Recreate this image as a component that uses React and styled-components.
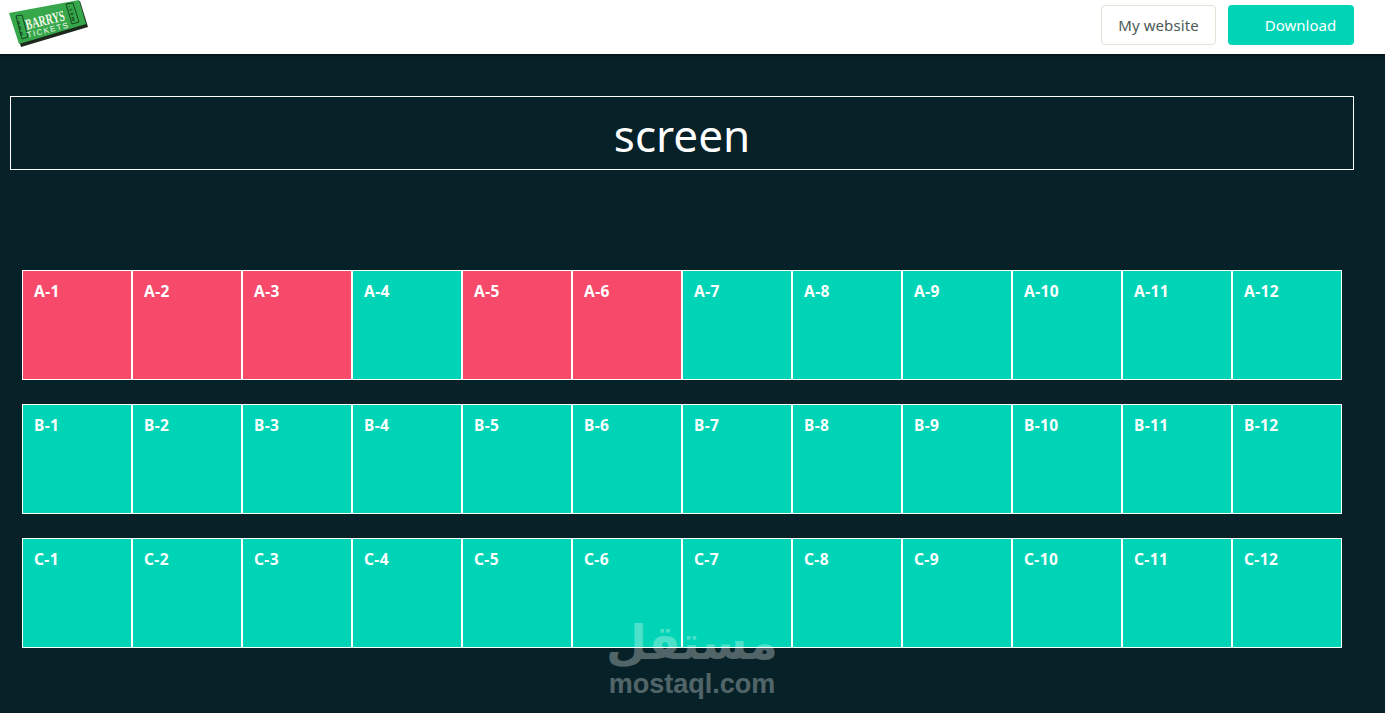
import styled, { createGlobalStyle } from 'styled-components';

const FONT = `'Noto Sans', 'Open Sans', sans-serif`;

const rows = [
  { name: 'A', taken: [1, 2, 3, 5, 6] },
  { name: 'B', taken: [] },
  { name: 'C', taken: [] },
];
const seatNumbers = Array.from({ length: 12 }, (_, i) => i + 1);

const GlobalStyle = createGlobalStyle`
  html, body {
    margin: 0;
    padding: 0;
    height: 100%;
    overflow: hidden;
    background: #062127;
    font-family: ${FONT};
  }
`;

const Page = styled.div`
  position: relative;
  height: 713px;
  overflow: hidden;
  background: #062127;
`;

const Header = styled.header`
  height: 54px;
  box-sizing: border-box;
  background: #fff;
  display: flex;
  align-items: flex-start;
  justify-content: space-between;
  padding: 0 31px 0 5px;
  box-shadow: 0 1px 3px rgba(0, 0, 0, 0.5);
`;

const Actions = styled.div`
  display: flex;
  gap: 12px;
  padding-top: 5px;
`;

const HeaderButton = styled.button`
  height: 40px;
  box-sizing: border-box;
  border-radius: 4px;
  font-family: ${FONT};
  font-size: 15px;
  cursor: pointer;
`;

const OutlineButton = styled(HeaderButton)`
  width: 115px;
  padding: 0;
  background: #fff;
  border: 1px solid #e2e2d6;
  color: #4c5a56;
  letter-spacing: 0.1px;
`;

const SolidButton = styled(HeaderButton)`
  width: 126px;
  padding: 0 0 0 19px;
  background: #00d4b6;
  border: 0;
  color: #fff;
`;

const Main = styled.main`
  padding: 42px 31px 0 10px;
`;

const Screen = styled.div`
  height: 74px;
  box-sizing: border-box;
  border: 1px solid #fff;
  padding-top: 4px;
  color: #fff;
  display: flex;
  align-items: center;
  justify-content: center;
  font-size: 44px;
  line-height: 1;
`;

const SeatRows = styled.div`
  display: flex;
  flex-direction: column;
  gap: 24px;
  margin: 100px 0 0 12px;
`;

const SeatRow = styled.div`
  display: flex;
`;

const Seat = styled.div`
  width: 110px;
  height: 110px;
  box-sizing: border-box;
  border: 1px solid #fff;
  padding: 10px 11px;
  background: ${props => (props.$taken ? '#f7496a' : '#00d4b6')};
  color: #fff;
  font-size: 15.5px;
  line-height: 20px;
  font-weight: 700;
  letter-spacing: 0.4px;
`;

const Watermark = styled.div`
  position: absolute;
  left: 592px;
  top: 616px;
  width: 200px;
  display: flex;
  flex-direction: column;
  align-items: center;
  color: #fff;
  opacity: 0.3;
  pointer-events: none;
`;

const WatermarkArabic = styled.div`
  font-family: 'DejaVu Sans', sans-serif;
  font-size: 47px;
  font-weight: 700;
  line-height: 54px;
  height: 54px;
`;

const WatermarkLatin = styled.div`
  font-family: 'Liberation Sans', sans-serif;
  font-size: 27px;
  font-weight: 700;
  line-height: 28px;
`;

const Logo = () => (
  <svg width="84" height="48" viewBox="5 0 84 48">
    <polygon points="11,15 80,1 88,27 21,47" fill="#1b2a1c" />
    <polygon points="9,13 79,0 86,24 19,44" fill="#36a84b" />
    <polygon points="16,16 22,15 28,37 22,39" fill="none" stroke="#15451f" strokeWidth="1" />
    <polygon points="66,4 73,3 79,22 72,24" fill="none" stroke="#15451f" strokeWidth="1" />
    <g transform="rotate(-14 46 24)" fill="#f2f7ea" textAnchor="middle">
      <text x="46" y="25" fontFamily="'Liberation Serif', serif" fontWeight="700" fontSize="15" textLength="40" lengthAdjust="spacingAndGlyphs">BARRYS</text>
      <text x="46" y="33" fontFamily="'Liberation Sans', sans-serif" fontSize="8" textLength="42">TICKETS</text>
    </g>
    <text transform="translate(23,35) rotate(-104)" fill="#12381b" fontFamily="'Liberation Sans', sans-serif" fontWeight="700" fontSize="5" textLength="18">www.</text>
    <text transform="translate(68.5,6) rotate(76)" fill="#12381b" fontFamily="'Liberation Sans', sans-serif" fontWeight="700" fontSize="5" textLength="16">.com</text>
  </svg>
);

const App = () => (
  <Page>
    <GlobalStyle />
    <Header>
      <Logo />
      <Actions>
        <OutlineButton>My website</OutlineButton>
        <SolidButton>Download</SolidButton>
      </Actions>
    </Header>
    <Main>
      <Screen>screen</Screen>
      <SeatRows>
        {rows.map(row => (
          <SeatRow key={row.name}>
            {seatNumbers.map(n => (
              <Seat key={n} $taken={row.taken.includes(n)}>
                {row.name}-{n}
              </Seat>
            ))}
          </SeatRow>
        ))}
      </SeatRows>
    </Main>
    <Watermark>
      <WatermarkArabic>مستقل</WatermarkArabic>
      <WatermarkLatin>mostaql.com</WatermarkLatin>
    </Watermark>
  </Page>
);

export default App;
